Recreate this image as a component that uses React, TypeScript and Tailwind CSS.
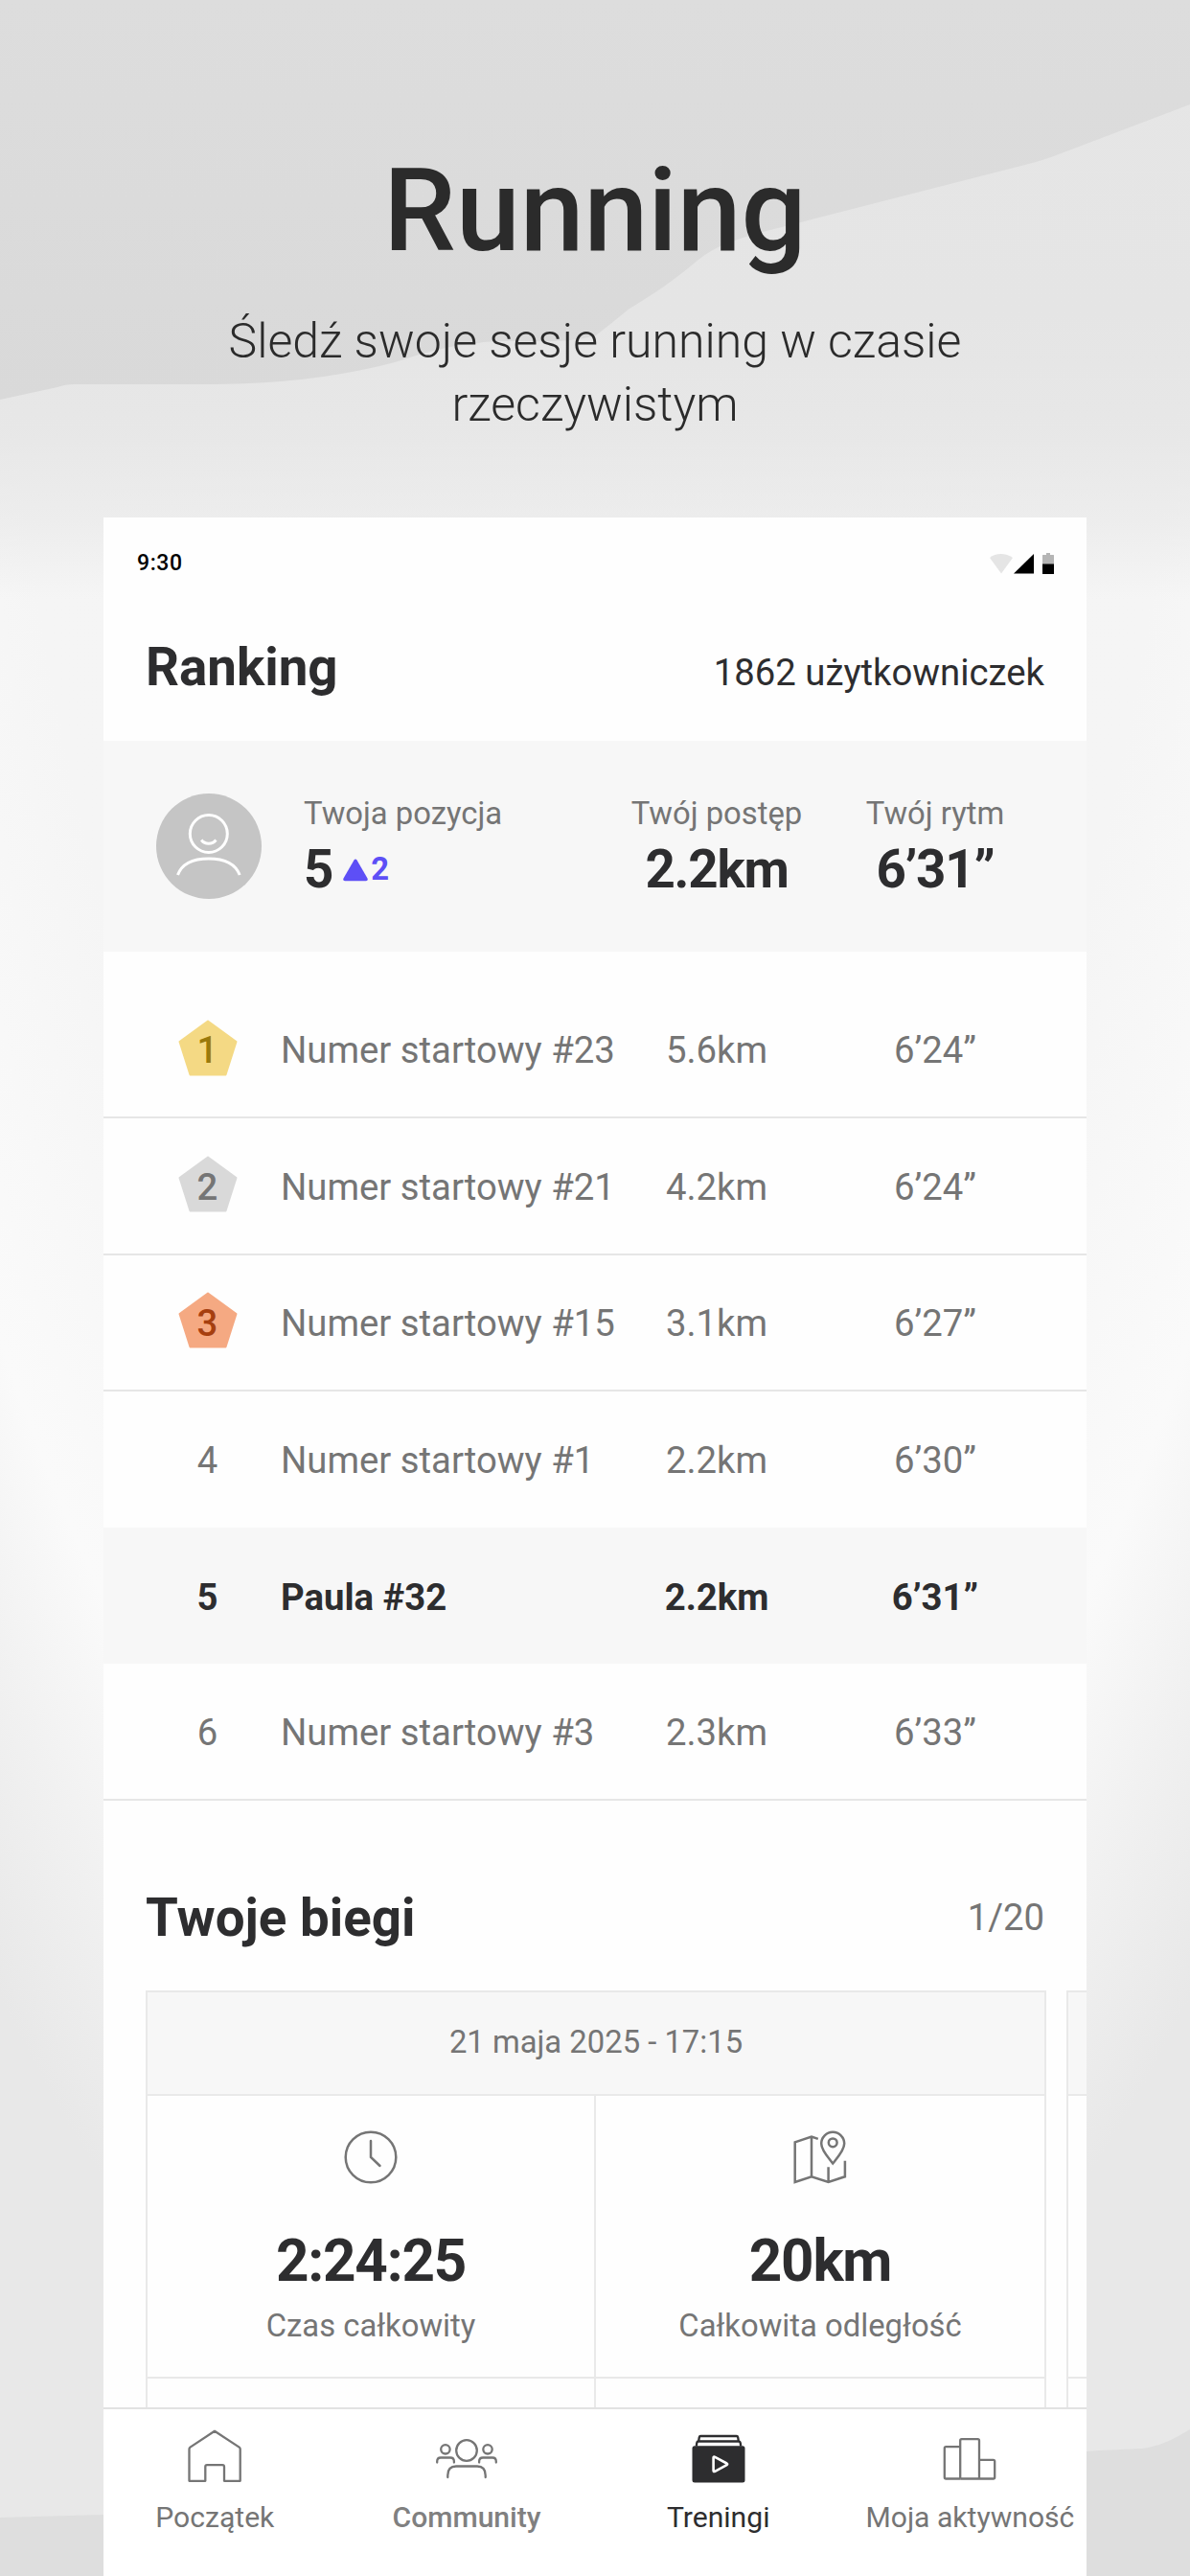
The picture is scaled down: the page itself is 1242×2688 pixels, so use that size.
import type { ReactNode } from 'react';

type Runner = {
	place: number;
	name: string;
	distance: string;
	pace: string;
	me?: boolean;
};

const RUNNERS: Runner[] = [
	{ place: 1, name: 'Numer startowy #23', distance: '5.6km', pace: '6’24”' },
	{ place: 2, name: 'Numer startowy #21', distance: '4.2km', pace: '6’24”' },
	{ place: 3, name: 'Numer startowy #15', distance: '3.1km', pace: '6’27”' },
	{ place: 4, name: 'Numer startowy #1', distance: '2.2km', pace: '6’30”' },
	{ place: 5, name: 'Paula #32', distance: '2.2km', pace: '6’31”', me: true },
	{ place: 6, name: 'Numer startowy #3', distance: '2.3km', pace: '6’33”' },
];

const MEDALS: Record<number, { fill: string; text: string }> = {
	1: { fill: '#f4d984', text: 'text-[#9a790b]' },
	2: { fill: '#d9d9d9', text: 'text-[#757575]' },
	3: { fill: '#f5a982', text: 'text-[#a63f0f]' },
};

function Backdrop() {
	return (
		<svg className="absolute inset-0 size-full" viewBox="0 0 1242 2688" preserveAspectRatio="none">
			<defs>
				<radialGradient
					id="glow"
					gradientUnits="userSpaceOnUse"
					cx="0"
					cy="0"
					r="1"
					gradientTransform="translate(621 0) scale(1012 2640)"
				>
					<stop offset="0" stopColor="#f4f4f4" />
					<stop offset="0.62" stopColor="#f5f5f5" />
					<stop offset="0.81" stopColor="#fafafa" />
					<stop offset="0.9" stopColor="#f1f1f1" />
					<stop offset="1" stopColor="#e8e8e8" />
				</radialGradient>
				<linearGradient id="haze" x1="0" y1="0" x2="0" y2="1">
					<stop offset="0" stopColor="#e6e6e6" />
					<stop offset="0.52" stopColor="#e5e5e5" />
					<stop offset="0.72" stopColor="#e5e5e5" stopOpacity="0.85" />
					<stop offset="0.87" stopColor="#e5e5e5" stopOpacity="0.5" />
					<stop offset="1" stopColor="#e5e5e5" stopOpacity="0" />
				</linearGradient>
				<linearGradient id="hill" x1="0" y1="0" x2="0" y2="1">
					<stop offset="0" stopColor="#dddddd" />
					<stop offset="1" stopColor="#d9d9d9" />
				</linearGradient>
			</defs>
			<rect width="1242" height="2688" fill="url(#glow)" />
			<rect width="1242" height="625" fill="url(#haze)" />
			<path
				d="M0 0H1242V109L1105 161Q1090 167 1070 172L847 229C790 244 755 250 729 271C700 295 685 305 657 322Q640 336 622 350C580 362 530 352 499 358C470 360 440 369 412 378C350 394 290 401 214 401H78Q68 401 60 404L0 417Z"
				fill="url(#hill)"
			/>
			<path
				d="M0 2627L108 2624L1134 2558C1160 2556 1175 2556 1192 2555C1214 2552 1228 2543 1242 2535V2688H0Z"
				fill="#dedede"
			/>
		</svg>
	);
}

function StatusBar() {
	return (
		<div className="flex h-[96px] items-center justify-between pl-[35px] pr-[33px]">
			<span className="text-[23px] font-medium tracking-[0.6px] text-black">9:30</span>
			<svg className="h-6 w-[70px]" viewBox="0 0 70 24">
				<path d="M2 6C8 .5 19 .5 26 6L14 22.500Z" fill="#e5e5e5" />
				<path d="M27 22.500L48 2V22.500Z" fill="#000" />
				<path d="M57 13V3.500Q57 3 57.500 3H61V1H65V3H68.500Q69 3 69 3.500V13Z" fill="#b5b5b5" />
				<path d="M57 12.500H69V22.500Q69 23 68.500 23H57.500Q57 23 57 22.500Z" fill="#000" />
			</svg>
		</div>
	);
}

function Stat({ label, children, className }: { label: string; children: ReactNode; className: string }) {
	return (
		<div className={`pt-1 ${className}`}>
			<p className="text-[32.8px] leading-[44px] text-[#757575]">{label}</p>
			<div className="text-[54.7px] font-bold leading-[72px] tracking-[-1.2px] text-[#2d2d2f]">
				{children}
			</div>
		</div>
	);
}

function Summary() {
	return (
		<div className="flex h-[220px] items-center bg-[#f7f7f7] pl-[55px]">
			<svg className="size-[110px] shrink-0" viewBox="0 0 110 110" fill="none">
				<circle cx="55" cy="55" r="55" fill="#c5c5c5" />
				<g stroke="#fff" strokeWidth="3">
					<circle cx="54.800" cy="42" r="19.500" />
					<path d="M47.200 48.500C51 53.500 58.500 53.500 62.400 48.500" />
					<path d="M22.500 85C27 73 38 68 54.800 68S82.500 73 87.200 85" />
				</g>
			</svg>
			<Stat label="Twoja pozycja" className="ml-11 w-[300px]">
				<div className="flex items-center">
					5
					<svg className="ml-[11px] mt-0.5 h-6 w-[26px]" viewBox="0 0 26 24" fill="#5d4ff6">
						<path d="M11.500 1.600Q13 -.6 14.500 1.600L25.500 20.500Q26.500 23 24 23.300H2Q-.5 23 .5 20.500Z" />
					</svg>
					<span className="ml-[3px] text-[32.8px] leading-10 text-[#5d4ff6]">2</span>
				</div>
			</Stat>
			<Stat label="Twój postęp" className="w-[262px] text-center">
				2.2km
			</Stat>
			<Stat label="Twój rytm" className="w-[194px] text-center">
				6’31”
			</Stat>
		</div>
	);
}

function RunnerRow({ runner }: { runner: Runner }) {
	const medal = MEDALS[runner.place];
	const tone = runner.me
		? 'bg-[#f7f7f7] font-bold text-[#2d2d2f]'
		: 'border-[#e6e6e6] text-[#757575]';
	const border = runner.place === 4 || runner.me ? '' : 'border-b-2';

	return (
		<li className={`flex h-[142.3px] items-center pt-0.5 text-[38.3px] ${tone} ${border}`}>
			<div className="grid w-[217px] shrink-0 place-items-center">
				{medal && (
					<svg className="col-start-1 row-start-1 mb-1.5 h-[59px] w-[62px]" viewBox="0 0 62 59">
						<path
							d="M31 1.500L60.500 23L49.500 57.500H12.500L1.500 23Z"
							fill={medal.fill}
							stroke={medal.fill}
							strokeWidth="2"
							strokeLinejoin="round"
						/>
					</svg>
				)}
				<span className={`col-start-1 row-start-1 ${medal ? `font-medium ${medal.text}` : ''}`}>
					{runner.place}
				</span>
			</div>
			<span className="-ml-8 w-[343px] whitespace-nowrap">{runner.name}</span>
			<span className="w-[224px] text-center">{runner.distance}</span>
			<span className="w-[232px] text-center">{runner.pace}</span>
		</li>
	);
}

function ClockIcon() {
	return (
		<svg className="size-14" viewBox="0 0 56 56" fill="none" stroke="#757575" strokeWidth="2.500" strokeLinecap="round">
			<circle cx="28" cy="28" r="26.300" />
			<path d="M28 11V28L37.500 37" />
		</svg>
	);
}

function MapIcon() {
	return (
		<svg className="size-14" viewBox="0 0 56 56" fill="none" stroke="#757575" strokeWidth="2.500">
			<path d="M25.800 8.900L19 6.600L1.700 12.300V54L19 48.300L36.600 54L53.900 48.300V31.800M19 6.600V48.300M36.600 38.300V54" />
			<path d="M41.200 34.500C37 29 29.200 21 29.200 13.800A12 12 0 0 1 53.200 13.800C53.200 21 45.500 29 41.200 34.500Z" />
			<circle cx="41.200" cy="12.800" r="4.400" />
		</svg>
	);
}

function RunCell({ icon, value, label }: { icon: ReactNode; value: string; label: string }) {
	return (
		<div className="flex h-[295px] flex-col items-center border-b-2 border-[#e9e9e9] pt-9">
			{icon}
			<p className="mt-[49px] text-[60.2px] font-bold leading-[64px] tracking-[-1.2px] text-[#2d2d2f]">{value}</p>
			<p className="mt-[13px] text-[32.8px] leading-[44px] text-[#757575]">{label}</p>
		</div>
	);
}

function Runs() {
	return (
		<section className="h-[633px] overflow-hidden pl-11 pt-[86px]">
			<div className="flex items-center justify-between pr-11">
				<h2 className="text-[54.7px] font-bold leading-[72px] text-[#2d2d2f]">Twoje biegi</h2>
				<span className="text-[38.3px] leading-[72px] text-[#757575]">1/20</span>
			</div>
			<div className="mt-10 flex gap-[21px]">
				<article className="w-[940px] shrink-0 border-2 border-[#e9e9e9]">
					<h3 className="flex h-[108px] items-center justify-center border-b-2 border-[#e9e9e9] bg-[#f7f7f7] text-[32.8px] text-[#757575]">
						21 maja 2025 - 17:15
					</h3>
					<div className="grid h-[400px] grid-cols-2 divide-x-2 divide-[#e9e9e9]">
						<div>
							<RunCell icon={<ClockIcon />} value="2:24:25" label="Czas całkowity" />
						</div>
						<div>
							<RunCell icon={<MapIcon />} value="20km" label="Całkowita odległość" />
						</div>
					</div>
				</article>
				<article className="w-[940px] shrink-0 border-2 border-[#e9e9e9]">
					<div className="h-[108px] border-b-2 border-[#e9e9e9] bg-[#f7f7f7]" />
					<div className="h-[295px] border-b-2 border-[#e9e9e9]" />
				</article>
			</div>
		</section>
	);
}

function HomeIcon() {
	return (
		<path
			d="M33 1.800L58.700 18.600Q59.700 19.300 59.700 20.500V53.800H43V39Q43 37.200 41.200 37.200H25Q23.300 37.200 23.300 39V53.800H6.500V20.500Q6.500 19.300 7.500 18.600Z"
			strokeLinejoin="round"
		/>
	);
}

function CommunityIcon() {
	return (
		<g strokeLinecap="round">
			<circle cx="33" cy="22" r="10.800" />
			<circle cx="10.900" cy="20.800" r="4.700" />
			<circle cx="55" cy="20.800" r="4.700" />
			<path d="M13.300 50V48Q13.300 38.500 22 38.500H44Q52.700 38.500 52.700 48V50" />
			<path d="M2.200 34.500V33.500Q2.200 29.500 6 29.500H16Q19.900 29.500 19.900 33.500V34.500" />
			<path d="M46.100 34.500V33.500Q46.100 29.500 50 29.500H60Q63.800 29.500 63.800 33.500V34.500" />
		</g>
	);
}

function TrainingIcon() {
	return (
		<>
			<path d="M12.200 12L12.800 8.300Q13 7 14.500 7H51.500Q53 7 53.200 8.300L53.800 12" />
			<path d="M9.800 17.500L10.300 14Q10.500 12.500 12 12.500H54Q55.500 12.500 55.700 14L56.200 17.500" />
			<rect x="5.500" y="17.200" width="55" height="38.200" rx="2.500" fill="#2d2d2f" stroke="none" />
			<path d="M27.600 29.600V43Q27.600 44.600 29.200 43.800L41.500 37.200Q42.800 36.300 41.500 35.500L29.200 28.800Q27.600 28 27.600 29.600Z" stroke="#fff" strokeWidth="2.600" />
		</>
	);
}

function ActivityIcon() {
	return (
		<g>
			<path d="M23.200 51.500H8.300Q6.800 51.500 6.800 50V19.700Q6.800 18.200 8.300 18.200H23.200" />
			<path d="M23.200 51.500V11.700Q23.200 10.200 24.700 10.200H41.500Q43 10.200 43 11.700V51.500" />
			<path d="M43 31.800H57.700Q59.200 31.800 59.200 33.300V50Q59.200 51.500 57.700 51.500H23.200" />
		</g>
	);
}

const TABS = [
	{ label: 'Początek', icon: <HomeIcon />, style: 'text-[#757575]' },
	{ label: 'Community', icon: <CommunityIcon />, style: 'font-medium text-[#808080]' },
	{ label: 'Treningi', icon: <TrainingIcon />, style: 'text-[#2d2d2f]' },
	{ label: 'Moja aktywność', icon: <ActivityIcon />, style: 'text-[#757575]' },
];

function TabBar() {
	return (
		<nav className="h-[176px] border-t-[2px] border-[#e2e2e2] bg-white">
			<div className="-ml-[15px] flex">
				{TABS.map((tab) => (
					<div key={tab.label} className={`flex w-[262.7px] shrink-0 flex-col items-center pt-[21.5px] ${tab.style}`}>
						<svg className="h-14 w-[66px]" viewBox="0 0 66 56" fill="none" stroke={tab.label === 'Treningi' ? '#2d2d2f' : '#757575'} strokeWidth="2.300">
							{tab.icon}
						</svg>
						<span className="mt-[17px] whitespace-nowrap text-[30.1px] leading-[38px]">{tab.label}</span>
					</div>
				))}
			</div>
		</nav>
	);
}

export default function App() {
	return (
		<div className="relative h-[2688px] w-[1242px] overflow-hidden font-[Roboto,sans-serif]">
			<Backdrop />
			<div className="relative flex h-full flex-col items-center">
				<header className="flex h-[540px] shrink-0 flex-col items-center pt-[150px] text-center text-[#2b2b2b]">
					<h1 className="text-[120px] font-medium leading-[140px]">Running</h1>
					<p className="mt-[34px] w-[900px] text-[50px] font-light leading-[65.6px]">
						Śledź swoje sesje running w czasie rzeczywistym
					</p>
				</header>
				<main className="flex w-[1026px] flex-col bg-[#fefefe]">
					<StatusBar />
					<div className="flex h-[137px] items-baseline justify-between px-11 pt-[24px]">
						<h2 className="text-[54.7px] font-bold leading-[72px] text-[#2d2d2f]">Ranking</h2>
						<span className="text-[38.3px] text-[#2d2d2f]">1862 użytkowniczek</span>
					</div>
					<Summary />
					<ul className="pt-8">
						{RUNNERS.map((runner) => (
							<RunnerRow key={runner.place} runner={runner} />
						))}
					</ul>
					<Runs />
					<TabBar />
				</main>
			</div>
		</div>
	);
}
